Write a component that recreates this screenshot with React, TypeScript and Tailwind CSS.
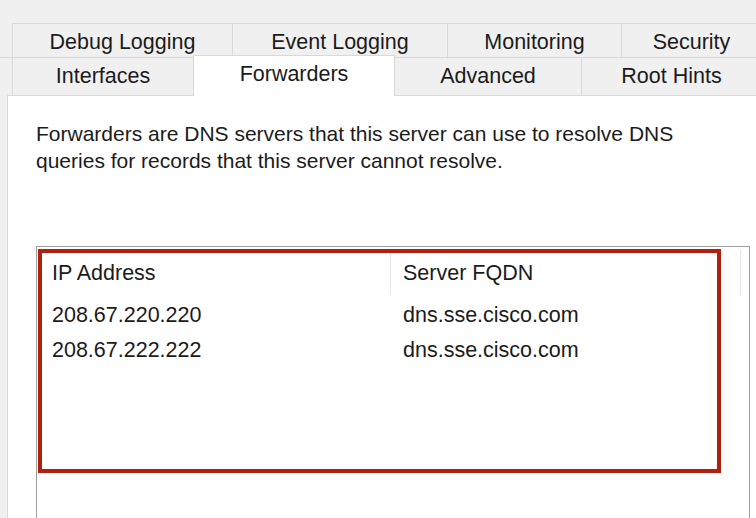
const font = { fontFamily: '"Liberation Sans", Arial, sans-serif' };

const rowOne = [
  { label: "Debug Logging", w: "w-[220px]" },
  { label: "Event Logging", w: "w-[215px]" },
  { label: "Monitoring", w: "w-[174px]" },
  { label: "Security", w: "w-[140px]" },
];

const forwarders = [
  { ip: "208.67.220.220", fqdn: "dns.sse.cisco.com" },
  { ip: "208.67.222.222", fqdn: "dns.sse.cisco.com" },
];

export default function App() {
  return (
    <div
      className="w-[756px] h-[518px] bg-[#f0f0f0] overflow-hidden text-[#1b1b1b] text-[21.5px]"
      style={font}
    >
      <div className="h-[23px]" />

      {/* tab strip, back row */}
      <div className="flex h-[34px] pl-[12px]">
        {rowOne.map((t) => (
          <div
            key={t.label}
            className={`${t.w} shrink-0 flex items-center justify-center border-t border-l border-[#d9d9d9] bg-[#f0f0f0] pt-[3px]`}
          >
            {t.label}
          </div>
        ))}
      </div>

      {/* tab strip, front row */}
      <div className="flex h-[38px] pl-[12px] border-t border-[#d9d9d9]">
        <div className="w-[181px] shrink-0 flex items-center justify-center border-l border-[#d9d9d9]">
          Interfaces
        </div>
        <div className="relative z-10 -mt-[3px] mb-[-1px] w-[202px] shrink-0 flex items-center justify-center bg-white border-x border-t border-[#d9d9d9] pb-[4px]">
          Forwarders
        </div>
        <div className="w-[186px] shrink-0 flex items-center justify-center">
          Advanced
        </div>
        <div className="w-[180px] shrink-0 flex items-center justify-center border-l border-[#d9d9d9]">
          Root Hints
        </div>
      </div>

      {/* page */}
      <div className="ml-[7px] h-[430px] bg-white border-l border-t border-[#d9d9d9] pl-[28px] pt-[24px]">
        <p className="leading-[27px] text-[21px] w-[710px]">
          Forwarders are DNS servers that this server can use to resolve DNS
          <br />
          queries for records that this server cannot resolve.
        </p>

        <div className="relative mt-[72px] w-[714px] h-[300px] border border-[#a0a0a0] bg-white">
          <div className="flex h-[51px]">
            <div className="w-[354px] flex items-center pl-[15px] pt-[1px] border-r border-[#e5e5e5] my-[3px]">
              IP Address
            </div>
            <div className="w-[350px] flex items-center pl-[12px] pt-[1px] border-r border-[#e5e5e5] my-[3px]">
              Server FQDN
            </div>
          </div>
          {forwarders.map((f) => (
            <div key={f.ip} className="flex h-[35px] items-center">
              <div className="w-[354px] pl-[15px]">{f.ip}</div>
              <div className="pl-[12px]">{f.fqdn}</div>
            </div>
          ))}

          {/* highlight annotation */}
          <div className="absolute left-[1px] top-[2px] w-[683px] h-[224px] border-[4px] border-[#b1200f] pointer-events-none" />
        </div>
      </div>
    </div>
  );
}
